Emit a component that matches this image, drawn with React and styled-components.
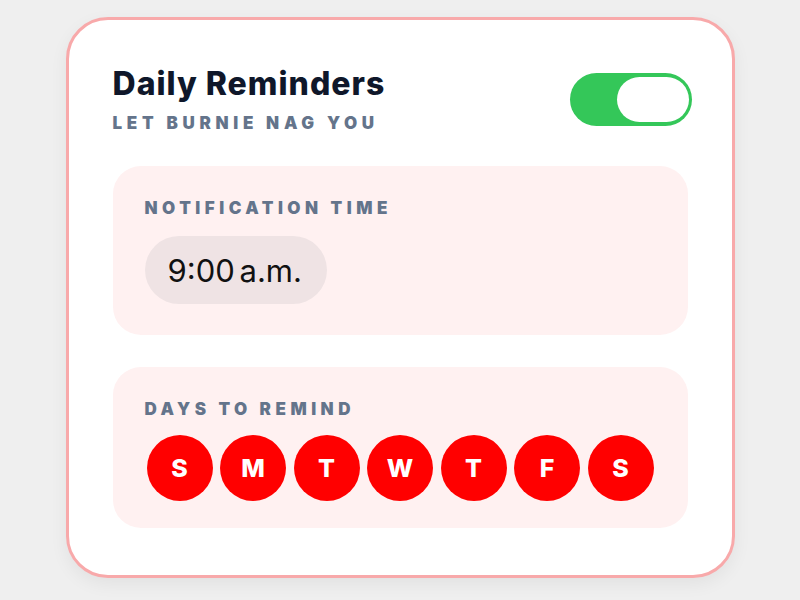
import styled, { createGlobalStyle } from 'styled-components'

const Global = createGlobalStyle`
  html, body {
    margin: 0;
    padding: 0;
    background: #efefef;
    font-family: Inter, "Noto Sans", sans-serif;
  }
`

const Page = styled.div`
  width: 800px;
  height: 600px;
  display: flex;
  justify-content: center;
  padding-top: 17px;
  box-sizing: border-box;
`

const Card = styled.div`
  width: 669px;
  height: 561px;
  box-sizing: border-box;
  background: #fff;
  border: 3px solid #f8a9aa;
  border-radius: 42px;
  box-shadow: 0 6px 18px rgba(0, 0, 0, 0.06);
  padding: 45px 44px 47px;
  display: flex;
  flex-direction: column;
`

const Header = styled.div`
  display: flex;
  align-items: center;
  justify-content: space-between;
  margin-bottom: 33px;
`

const Title = styled.h1`
  margin: 0;
  font-size: 32px;
  line-height: 38px;
  font-weight: 800;
  color: #0f172a;
  letter-spacing: 1px;
`

const Subtitle = styled.div`
  margin-top: 10px;
  font-size: 17px;
  line-height: 20px;
  font-weight: 900;
  color: #64748b;
  letter-spacing: 4.7px;
`

const Toggle = styled.div`
  width: 122px;
  height: 53px;
  box-sizing: border-box;
  border-radius: 27px;
  background: #34c759;
  padding: 4px 3px;
  display: flex;
  justify-content: ${p => (p.on ? 'flex-end' : 'flex-start')};
  margin-right: -4px;
`

const Knob = styled.div`
  width: 72px;
  height: 45px;
  border-radius: 23px;
  background: #fff;
`

const Section = styled.div`
  background: #fff1f1;
  border-radius: 28px;
  padding: 32px 32px ${p => p.bottom}px;
  display: flex;
  flex-direction: column;
  gap: 16px;
  & + & {
    margin-top: 32px;
  }
`

const Label = styled.div`
  font-size: 17px;
  line-height: 20px;
  font-weight: 900;
  color: #64748b;
  letter-spacing: 4.5px;
`

const TimePill = styled.div`
  align-self: flex-start;
  margin-top: 2px;
  height: 68px;
  box-sizing: border-box;
  padding: 0 25px 0 23px;
  border-radius: 34px;
  background: #efe3e4;
  display: flex;
  align-items: center;
  font-size: 31px;
  font-weight: 400;
  color: #111;
  word-spacing: -4px;
`

const Days = styled.div`
  display: flex;
  gap: 7.5px;
  margin-left: 2px;
`

const Day = styled.div`
  width: 66px;
  height: 66px;
  border-radius: 50%;
  background: ${p => (p.active ? '#ff0000' : '#f3d6d6')};
  color: #fff;
  display: flex;
  align-items: center;
  justify-content: center;
  font-size: 25px;
  font-weight: 800;
`

const days = ['S', 'M', 'T', 'W', 'T', 'F', 'S']

export default function App() {
  return (
    <>
      <Global />
      <Page>
        <Card>
          <Header>
            <div>
              <Title>Daily Reminders</Title>
              <Subtitle>LET BURNIE NAG YOU</Subtitle>
            </div>
            <Toggle on>
              <Knob />
            </Toggle>
          </Header>
          <Section bottom={31}>
            <Label>NOTIFICATION TIME</Label>
            <TimePill>9:00 a.m.</TimePill>
          </Section>
          <Section bottom={27}>
            <Label>DAYS TO REMIND</Label>
            <Days>
              {days.map((d, i) => (
                <Day key={i} active>{d}</Day>
              ))}
            </Days>
          </Section>
        </Card>
      </Page>
    </>
  )
}
